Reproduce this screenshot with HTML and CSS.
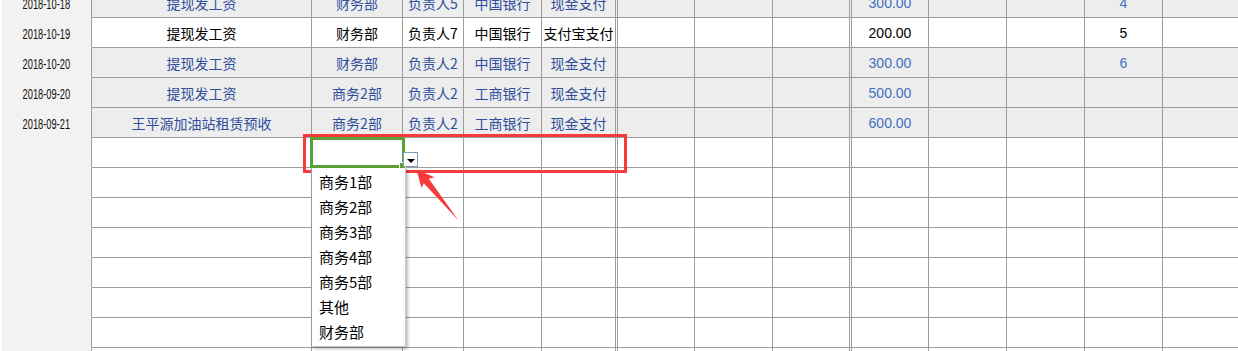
FILE: index.html
```html
<!DOCTYPE html>
<html lang="zh">
<head>
<meta charset="utf-8">
<title>Sheet</title>
<link rel="stylesheet" href="styles.css">
</head>
<body>
<div class="sheet">
  <div class="row shade">
    <div class="c date"><span class="d">2018-10-18</span></div>
    <div class="c">提现发工资</div><div class="c">财务部</div><div class="c">负责人5</div><div class="c">中国银行</div><div class="c dbl">现金支付</div>
    <div class="c"></div><div class="c"></div><div class="c dbl"></div>
    <div class="c num">300.00</div><div class="c"></div><div class="c"></div><div class="c num">4</div><div class="c last"></div>
  </div>
  <div class="row plain">
    <div class="c date"><span class="d">2018-10-19</span></div>
    <div class="c">提现发工资</div><div class="c">财务部</div><div class="c">负责人7</div><div class="c">中国银行</div><div class="c dbl">支付宝支付</div>
    <div class="c"></div><div class="c"></div><div class="c dbl"></div>
    <div class="c num">200.00</div><div class="c"></div><div class="c"></div><div class="c num">5</div><div class="c last"></div>
  </div>
  <div class="row shade">
    <div class="c date"><span class="d">2018-10-20</span></div>
    <div class="c">提现发工资</div><div class="c">财务部</div><div class="c">负责人2</div><div class="c">中国银行</div><div class="c dbl">现金支付</div>
    <div class="c"></div><div class="c"></div><div class="c dbl"></div>
    <div class="c num">300.00</div><div class="c"></div><div class="c"></div><div class="c num">6</div><div class="c last"></div>
  </div>
  <div class="row shade">
    <div class="c date"><span class="d">2018-09-20</span></div>
    <div class="c">提现发工资</div><div class="c">商务2部</div><div class="c">负责人2</div><div class="c">工商银行</div><div class="c dbl">现金支付</div>
    <div class="c"></div><div class="c"></div><div class="c dbl"></div>
    <div class="c num">500.00</div><div class="c"></div><div class="c"></div><div class="c num"></div><div class="c last"></div>
  </div>
  <div class="row shade">
    <div class="c date"><span class="d">2018-09-21</span></div>
    <div class="c">王平源加油站租赁预收</div><div class="c">商务2部</div><div class="c">负责人2</div><div class="c">工商银行</div><div class="c dbl">现金支付</div>
    <div class="c"></div><div class="c"></div><div class="c dbl"></div>
    <div class="c num">600.00</div><div class="c"></div><div class="c"></div><div class="c num"></div><div class="c last"></div>
  </div>
  <div class="row"><div class="c date"></div><div class="c"></div><div class="c"></div><div class="c"></div><div class="c"></div><div class="c dbl"></div><div class="c"></div><div class="c"></div><div class="c dbl"></div><div class="c"></div><div class="c"></div><div class="c"></div><div class="c"></div><div class="c last"></div></div>
  <div class="row"><div class="c date"></div><div class="c"></div><div class="c"></div><div class="c"></div><div class="c"></div><div class="c dbl"></div><div class="c"></div><div class="c"></div><div class="c dbl"></div><div class="c"></div><div class="c"></div><div class="c"></div><div class="c"></div><div class="c last"></div></div>
  <div class="row"><div class="c date"></div><div class="c"></div><div class="c"></div><div class="c"></div><div class="c"></div><div class="c dbl"></div><div class="c"></div><div class="c"></div><div class="c dbl"></div><div class="c"></div><div class="c"></div><div class="c"></div><div class="c"></div><div class="c last"></div></div>
  <div class="row"><div class="c date"></div><div class="c"></div><div class="c"></div><div class="c"></div><div class="c"></div><div class="c dbl"></div><div class="c"></div><div class="c"></div><div class="c dbl"></div><div class="c"></div><div class="c"></div><div class="c"></div><div class="c"></div><div class="c last"></div></div>
  <div class="row"><div class="c date"></div><div class="c"></div><div class="c"></div><div class="c"></div><div class="c"></div><div class="c dbl"></div><div class="c"></div><div class="c"></div><div class="c dbl"></div><div class="c"></div><div class="c"></div><div class="c"></div><div class="c"></div><div class="c last"></div></div>
  <div class="row"><div class="c date"></div><div class="c"></div><div class="c"></div><div class="c"></div><div class="c"></div><div class="c dbl"></div><div class="c"></div><div class="c"></div><div class="c dbl"></div><div class="c"></div><div class="c"></div><div class="c"></div><div class="c"></div><div class="c last"></div></div>
  <div class="row"><div class="c date"></div><div class="c"></div><div class="c"></div><div class="c"></div><div class="c"></div><div class="c dbl"></div><div class="c"></div><div class="c"></div><div class="c dbl"></div><div class="c"></div><div class="c"></div><div class="c"></div><div class="c"></div><div class="c last"></div></div>
  <div class="row"><div class="c date"></div><div class="c"></div><div class="c"></div><div class="c"></div><div class="c"></div><div class="c dbl"></div><div class="c"></div><div class="c"></div><div class="c dbl"></div><div class="c"></div><div class="c"></div><div class="c"></div><div class="c"></div><div class="c last"></div></div>
</div>

<div class="hl"></div>
<div class="sel"></div>
<div class="dd-btn"></div>
<ul class="dd-list">
  <li>商务1部</li>
  <li>商务2部</li>
  <li>商务3部</li>
  <li>商务4部</li>
  <li>商务5部</li>
  <li>其他</li>
  <li>财务部</li>
</ul>
<svg class="arrow" width="1238" height="351" viewBox="0 0 1238 351" xmlns="http://www.w3.org/2000/svg">
  <polygon points="416.5,169.5 421.5,188 423.8,183.2 458.5,220.5 428.8,178.8 434.5,177.2" fill="#f53b3b"/>
</svg>
</body>
</html>
```

FILE: styles.css
```css
* { box-sizing: border-box; }

body {
  margin: 0;
  width: 1238px;
  height: 351px;
  overflow: hidden;
  position: relative;
  background: #ffffff;
  font-family: "Noto Sans CJK SC", "Noto Sans", sans-serif;
}

.sheet {
  margin-top: -12px;
  padding-left: 2px;
}

.row {
  display: grid;
  grid-template-columns: 90px 220px 91px 61px 78px 76px 77px 78px 79px 77px 78px 78px 78px 1fr;
  height: 30px;
}

.c {
  border-right: 1px solid #9c9c9c;
  border-bottom: 1px solid #9c9c9c;
  display: flex;
  align-items: center;
  justify-content: center;
  font-size: 14px;
  color: #2f4f9c;
  white-space: nowrap;
  overflow: hidden;
  background: #ffffff;
}

.c.dbl {
  border-right: 3px double #9c9c9c;
}

.c.last {
  border-right: none;
}

.shade .c {
  background: #ededed;
}

.plain .c {
  color: #000000;
}

.c.num {
  font-family: "Liberation Sans", Arial, sans-serif;
  color: #4470c0;
  padding-top: 1px;
}

.plain .c.num {
  color: #000000;
}

.c.date,
.shade .c.date {
  background: #f2f2f2;
  border-bottom-color: #f2f2f2;
  color: #111111;
}

.d {
  display: inline-block;
  font-family: "Liberation Sans", Arial, sans-serif;
  font-size: 15px;
  transform: scaleX(0.62);
  padding-top: 1px;
}

/* overlays */
.hl {
  position: absolute;
  left: 303px;
  top: 134px;
  width: 324px;
  height: 39px;
  border: 3px solid #f53b3b;
}

.sel {
  position: absolute;
  left: 310px;
  top: 137px;
  width: 95px;
  height: 31px;
  border: 3px solid #5b9f35;
}

.sel::after {
  content: "";
  position: absolute;
  right: -4px;
  bottom: -4px;
  width: 5px;
  height: 5px;
  background: #5b9f35;
  border: 1px solid #ffffff;
}

.dd-btn {
  position: absolute;
  left: 403px;
  top: 152px;
  width: 15px;
  height: 15px;
  border: 1px solid #7f9db9;
  background: #ffffff;
}

.dd-btn::after {
  content: "";
  position: absolute;
  left: 3px;
  top: 6px;
  border-left: 4px solid transparent;
  border-right: 4px solid transparent;
  border-top: 4px solid #000000;
}

.dd-list {
  position: absolute;
  left: 311px;
  top: 168px;
  width: 95px;
  height: 179px;
  margin: 0;
  padding: 1px 0 0 7px;
  list-style: none;
  background: #ffffff;
  border-left: 1px solid #9c9c9c;
  border-right: 1px solid #c4c4c4;
  border-bottom: 1px solid #c4c4c4;
  box-shadow: 2px 2px 3px rgba(0, 0, 0, 0.25);
  font-size: 15px;
  line-height: 25px;
  color: #000000;
}

.dd-list li {
  height: 25px;
  white-space: nowrap;
}

.arrow {
  position: absolute;
  left: 0;
  top: 0;
  pointer-events: none;
}
```
